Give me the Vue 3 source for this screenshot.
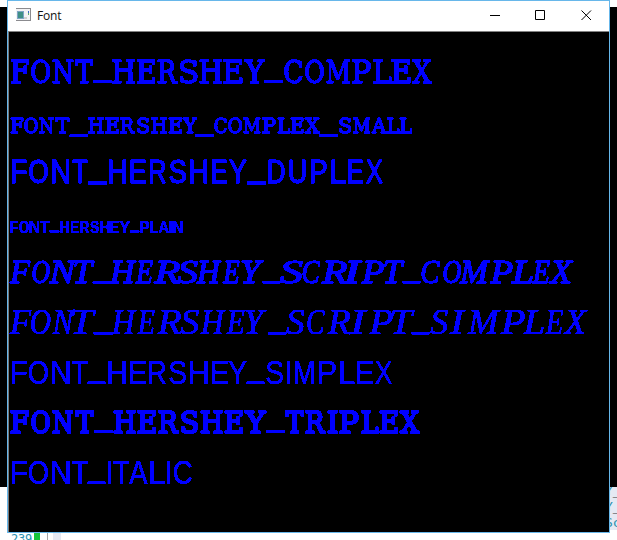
<script setup>
const SANS = '"Liberation Sans", sans-serif'
const SLAB = '"DejaVu Serif", serif'
const SCRIPT = '"Liberation Serif", serif'

// Every sample lists its glyph extents as [left, right] pairs on the canvas.
const samples = [
  { text: 'FONT_HERSHEY_COMPLEX', family: SLAB, top: 60, bottom: 84, stroke: 1.3, bar: [80, 84],
    ink: [10.5,29.3,31,50.3,52.3,73.7,75,93.5,93.3,112,112,135.3,136.7,155.3,157.3,178,179.5,198,199.3,222.5,223,242.5,244.3,265,264,283,284,303,305,324,326.3,350,351.7,371,373,391.7,391,410.7,411.7,432] },
  { text: 'FONT_HERSHEY_COMPLEX_SMALL', family: SLAB, top: 118, bottom: 134, stroke: 1.3, bar: [134, 137],
    ink: [10.3,23.7,24,38,39,54,55,69.7,69.5,88,88,104,105,119,120,135,137,149.7,151,167,168.3,182.3,182.3,197.3,195,214,214,227,227.7,242.3,243.3,260.7,262,276,277.3,290.3,290.3,303.7,304.3,320.3,319,338,339,351.7,353,370.3,371.3,386.7,386.7,399.3,399.3,412.3] },
  { text: 'FONT_HERSHEY_DUPLEX', family: SANS, top: 160, bottom: 184, stroke: 1.2, bar: [180, 184],
    ink: [11.7,27,29,48,52,69.3,72.3,88,88,107,109,126,130.3,146,150,166,169,186,190,207.3,212,227,229,247,247,266.3,268,285,289,306,311,327,331,346,348,363,366,383] },
  { text: 'FONT_HERSHEY_PLAIN', family: SANS, weight: 'bold', top: 221, bottom: 233, stroke: 0.3, bar: [230, 233],
    ink: [10,18,19,29,29.7,39.3,40,49.7,49.3,59.7,60,69,70.7,79,80,89.3,90,99,100,109.3,110.3,119,119.3,130.3,129.7,139.7,140,149.3,150,158.3,158.7,169,169.5,172.5,173,182.3] },
  { text: 'FONT_HERSHEY_SCRIPT_COMPLEX', family: SCRIPT, slant: 'italic', top: 260, bottom: 284, stroke: 1.2, bar: [281, 284],
    ink: [9,31,32.3,50,48.3,77.7,74,95,92.3,110,109,137.3,135,153.3,153,181,176.7,198,196,222.3,222.3,240,241,264.3,262.3,281,279,303,302.3,320.7,320.7,348.3,342,363,360.7,384.3,384,405,402,421,421,440.3,443.3,461.3,459,490.7,489.3,513,510.7,533.3,531.7,550.3,548,574.3] },
  { text: 'FONT_HERSHEY_SCRIPT_SIMPLEX', family: SCRIPT, slant: 'italic', top: 310, bottom: 334, stroke: 0.5, bar: [331, 334],
    ink: [9,31.7,31,50.7,51.7,75,72,96.7,93.3,113,111,137,137,155,156.7,182,180,199,200,226,226,245,245,267,267.7,287,285.7,304.3,307,325,327,351,349,367.7,368.3,393,391.7,415,411,430,430,448,449,466,467.3,501,500,525,522.7,544,545,563.3,562.7,588] },
  { text: 'FONT_HERSHEY_SIMPLEX', family: SANS, top: 360, bottom: 384, stroke: 0.3, bar: [381, 384],
    ink: [12,27,29,48,52,69.3,71.7,87.7,87.3,106,108,125.5,130,146,149.3,166,169,186,190,207.3,212,228,228,247,246,265,266,283,287,290,295,314,319,336,340,354.5,357,373,375,392.3] },
  { text: 'FONT_HERSHEY_TRIPLEX', family: SLAB, top: 410, bottom: 434, stroke: 2.1, bar: [430, 434],
    ink: [10,29.3,31,50,52.3,73.3,75,94,94,113.3,113.3,136,137,156,158,179.3,181,198.7,200.3,223,224.3,243,244.3,266.7,266,285,285,304.3,305,326,327.3,338,339,359,361,379,379.3,398.3,399.3,420] },
  { text: 'FONT_ITALIC', family: SANS, top: 460, bottom: 484, stroke: 0.3, bar: [481, 484],
    ink: [11.7,27,29,48,52,69.3,72,87.7,87.3,106,108,111,113.3,129.3,129,148,150,165,167,170,174,192] }
]

const ctx = document.createElement('canvas').getContext('2d')

function layout(sample) {
  ctx.font = `${sample.slant || 'normal'} ${sample.weight || 'normal'} 1000px ${sample.family}`
  const capHeight = ctx.measureText('H').actualBoundingBoxAscent / 1000
  const size = (sample.bottom - sample.top - sample.stroke) / capHeight
  const glyphs = [...sample.text].map((char, i) => {
    const m = ctx.measureText(char)
    const k = size / 1000
    let stroke = sample.stroke
    let y = sample.bottom - stroke / 2
    if (char === '_') {
      const thickness = (m.actualBoundingBoxAscent + m.actualBoundingBoxDescent) * k
      stroke = Math.max(0, sample.bar[1] - sample.bar[0] - thickness)
      y = sample.bar[1] - stroke / 2 - m.actualBoundingBoxDescent * k
    }
    const left = sample.ink[i * 2]
    const width = sample.ink[i * 2 + 1] - left
    const natural = (m.actualBoundingBoxLeft + m.actualBoundingBoxRight) * k + stroke
    const scale = Math.min(width / natural, 1.6)
    const inset = (width - natural * scale) / 2
    return {
      char, y, stroke,
      x: left + inset + scale * (m.actualBoundingBoxLeft * k + stroke / 2),
      length: m.width * k * scale
    }
  })
  return { ...sample, size, glyphs }
}

const rows = samples.map(layout)
</script>

<template>
  <div class="desktop">
    <div class="backdrop"></div>
    <div class="editor">
      <div class="code"><span>Y<b>_</b></span><span>Y<b>_</b></span><span>Sc</span></div>
    </div>
    <div class="gutter">
      <span class="line-no">239</span><i class="changed"></i><i class="rule"></i><i class="indent"></i>
    </div>

    <section class="window">
      <header class="titlebar">
        <svg class="app-icon" width="16" height="14" viewBox="0 0 16 14">
          <rect x="0" y="0" width="15" height="13" fill="#8b8b8f" />
          <rect x="0" y="1" width="14" height="11" fill="#f3f3f5" />
          <rect x="1" y="3" width="7" height="8" fill="#7fa4c4" />
          <rect x="2" y="4" width="5" height="6" fill="#3f8f86" />
          <rect x="8" y="9" width="3" height="2" fill="#d0d0d0" />
          <rect x="12" y="3" width="1" height="2" fill="#3f64c8" />
          <rect x="12" y="5" width="1" height="2" fill="#5fae68" />
        </svg>
        <h1>Font</h1>
        <div class="controls">
          <svg width="46" height="30" viewBox="0 0 46 30"><path d="M19 14.5h10" /></svg>
          <svg width="46" height="30" viewBox="0 0 46 30"><path d="M18.5 9.5h9v9h-9z" /></svg>
          <svg width="46" height="30" viewBox="0 0 46 30"><path d="M18.500 9.500l9.500 9.500M28 9.500l-9.500 9.500" /></svg>
        </div>
      </header>
      <svg class="canvas" width="600" height="500" viewBox="9 32 600 500">
        <defs>
          <filter id="aliased" filterUnits="userSpaceOnUse" x="9" y="32" width="600" height="500">
            <feComponentTransfer><feFuncA type="discrete" tableValues="0 1 1" /></feComponentTransfer>
          </filter>
        </defs>
        <g filter="url(#aliased)">
          <text
            v-for="row in rows" :key="row.text"
            :font-family="row.family" :font-size="row.size"
            :font-weight="row.weight" :font-style="row.slant"
          ><tspan
            v-for="(g, i) in row.glyphs" :key="i"
            :x="g.x" :y="g.y" :textLength="g.length" lengthAdjust="spacingAndGlyphs"
            :stroke-width="g.stroke"
          >{{ g.char }}</tspan></text>
        </g>
      </svg>
    </section>
  </div>
</template>

<style>
body { margin: 0; background: #fff; }
</style>

<style scoped>
.desktop {
  position: relative;
  width: 617px;
  height: 540px;
  overflow: hidden;
  box-sizing: border-box;
  padding-left: 7px;
  background: #fff;
  font-family: "Open Sans", sans-serif;
}
.backdrop { position: absolute; left: 0; top: 7px; width: 617px; height: 480px; background: #000; }
.editor { position: absolute; left: 600px; top: 487px; width: 17px; height: 43px; background: #e5e9f3; overflow: hidden; }
.code {
  display: flex;
  flex-direction: column;
  margin: -4px 0 0 5px;
  font: 13px/16px "DejaVu Sans Mono", monospace;
  color: #2b91af;
}
.code b { font-weight: normal; color: #333; }
.gutter { position: absolute; left: 11px; top: 532px; display: flex; height: 8px; overflow: hidden; }
.line-no { width: 23px; font: 12px/14px "DejaVu Sans Mono", monospace; letter-spacing: -0.2px; color: #2b91af; }
.changed { width: 6px; background: #17c63b; }
.rule { width: 1px; margin-left: 7px; background: #a5a5a5; }
.indent { width: 8px; margin-left: 5px; background: #e5e9f3; }

.window {
  position: relative;
  box-sizing: border-box;
  width: 603px;
  height: 533px;
  border: 1px solid #67b7ea;
  background: #fff;
}
.titlebar { display: flex; align-items: flex-start; height: 30px; border-bottom: 1px solid #828282; }
.app-icon { margin: 7px 0 0 8px; }
h1 { margin: 6px 0 0 5px; font-size: 12px; line-height: 17px; font-weight: 400; letter-spacing: -0.2px; color: #111; }
.controls { display: flex; margin-left: auto; }
.controls path { fill: none; stroke: #000; stroke-width: 1; }
.canvas { display: block; box-sizing: content-box; border-left: 1px solid #777; background: #000; }
.canvas text { fill: #00f; stroke: #00f; stroke-linejoin: round; }
</style>
